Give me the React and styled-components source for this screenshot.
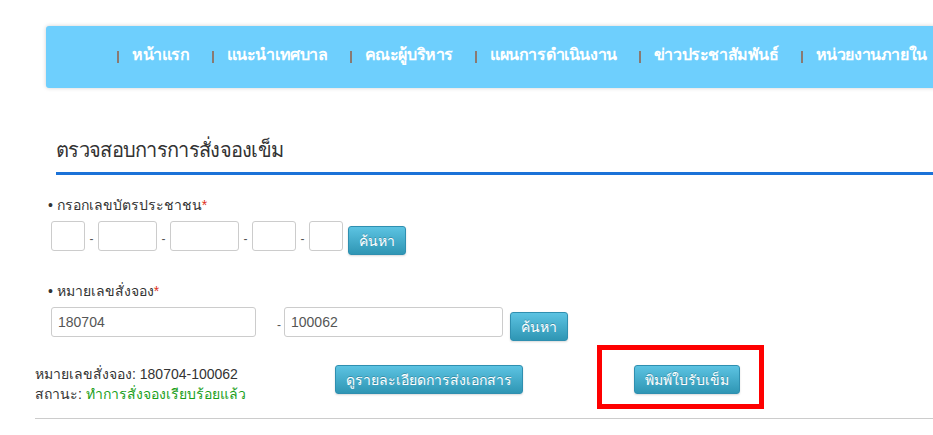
import React from 'react';
import styled, { createGlobalStyle } from 'styled-components';

const Global = createGlobalStyle`
  html, body {
    margin: 0;
    padding: 0;
    background: #fff;
    overflow: hidden;
  }
  body {
    font-family: Tahoma, "Liberation Sans", "DejaVu Sans", sans-serif;
    color: #333;
  }
`;

const Page = styled.div`
  width: 933px;
  height: 435px;
  overflow: hidden;
  padding-top: 26px;
  box-sizing: border-box;
`;

const NavBar = styled.nav`
  margin-left: 46px;
  width: 1100px;
  height: 62px;
  background: #6ecffd;
  border-radius: 3px;
  box-shadow: 0 0 4px rgba(0, 0, 0, 0.18);
  display: flex;
  align-items: center;
  padding: 0 0 6px 71px;
  box-sizing: border-box;
`;

const NavItem = styled.a`
  display: flex;
  align-items: center;
  color: #fff;
  font-weight: bold;
  font-size: 16px;
  letter-spacing: -0.4px;
  text-decoration: none;
  white-space: nowrap;
  margin-right: 22px;
  &::before {
    content: '';
    display: inline-block;
    width: 2px;
    height: 12px;
    margin-top: 6px;
    background: #8a7a72;
    margin-right: 13px;
  }
`;

const Content = styled.div`
  padding: 0 0 0 35px;
`;

const Title = styled.h2`
  margin: 46px 0 0 21px;
  padding-bottom: 6px;
  font-size: 20px;
  letter-spacing: -0.7px;
  font-weight: normal;
  color: #333;
  border-bottom: 3px solid #1b72d8;
`;

const Section = styled.div`
  margin-left: 16px;
  margin-top: ${p => p.$top}px;
`;

const Label = styled.div`
  font-size: 14px;
  color: #333;
  margin: 0 0 5px -3px;
  &::before {
    content: '• ';
  }
  span {
    color: #e0301e;
  }
`;

const Row = styled.div`
  display: flex;
  align-items: flex-start;
`;

const Box = styled.input`
  width: ${p => p.$w}px;
  height: 30px;
  box-sizing: border-box;
  border: 1px solid #ccc;
  border-radius: 3px;
  padding: 0 6px;
  font-size: 14px;
  font-family: inherit;
  color: #555;
  background: #fff;
  margin: 0;
`;

const Dash = styled.span`
  width: ${p => p.$w || 13}px;
  box-sizing: border-box;
  text-align: ${p => (p.$right ? 'right' : 'center')};
  padding-right: ${p => (p.$right ? 3 : 0)}px;
  font-size: 12px;
  color: #555;
  padding-top: 11px;
`;

const Button = styled.button`
  height: 29px;
  padding: 0 ${p => p.$px || 10}px;
  margin: ${p => p.$mt || 0}px 0 0 ${p => p.$ml || 0}px;
  border: 1px solid #2f8fb0;
  border-radius: 3px;
  background: linear-gradient(#5cc3e2, #2f96b4);
  color: #fff;
  font-size: 14px;
  font-family: inherit;
  text-shadow: 0 -1px 0 rgba(0, 0, 0, 0.2);
  box-shadow: 0 1px 2px rgba(0, 0, 0, 0.15);
  cursor: pointer;
`;

const Result = styled.div`
  margin-top: 24px;
  display: flex;
  align-items: flex-start;
  border-bottom: 1px solid #ccc;
  padding-bottom: 14px;
`;

const Info = styled.div`
  width: 300px;
  font-size: 14px;
  line-height: 20px;
  color: #333;
  margin-top: -1px;
  em {
    font-style: normal;
    color: #1aa01a;
  }
`;

const Highlight = styled.div`
  margin: -20px 0 -16px ${p => p.$ml}px;
  padding: 15px 0 0 32px;
  width: 167px;
  height: 64px;
  box-sizing: border-box;
  border: 5px solid #fe0000;
`;

const navItems = [
  'หน้าแรก',
  'แนะนำเทศบาล',
  'คณะผู้บริหาร',
  'แผนการดำเนินงาน',
  'ข่าวประชาสัมพันธ์',
  'หน่วยงานภายใน',
];

export default function App() {
  return (
    <Page>
      <Global />
      <NavBar>
        {navItems.map(n => (
          <NavItem key={n} href="#">{n}</NavItem>
        ))}
      </NavBar>
      <Content>
        <Title>ตรวจสอบการการสั่งจองเข็ม</Title>
        <Section $top={19}>
          <Label>กรอกเลขบัตรประชาชน<span>*</span></Label>
          <Row>
            <Box $w={34} />
            <Dash>-</Dash>
            <Box $w={59} />
            <Dash>-</Dash>
            <Box $w={69} />
            <Dash>-</Dash>
            <Box $w={44} />
            <Dash>-</Dash>
            <Box $w={34} />
            <Button $ml={5} $mt={5}>ค้นหา</Button>
          </Row>
        </Section>
        <Section $top={25}>
          <Label>หมายเลขสั่งจอง<span>*</span></Label>
          <Row>
            <Box $w={205} defaultValue="180704" />
            <Dash $w={28} $right>-</Dash>
            <Box $w={219} defaultValue="100062" />
            <Button $ml={7} $mt={5}>ค้นหา</Button>
          </Row>
        </Section>
        <Result>
          <Info>
            หมายเลขสั่งจอง: 180704-100062
            <br />
            สถานะ: <em>ทำการสั่งจองเรียบร้อยแล้ว</em>
          </Info>
          <Button>ดูรายละเอียดการส่งเอกสาร</Button>
          <Highlight $ml={74}>
            <Button>พิมพ์ใบรับเข็ม</Button>
          </Highlight>
        </Result>
      </Content>
    </Page>
  );
}
